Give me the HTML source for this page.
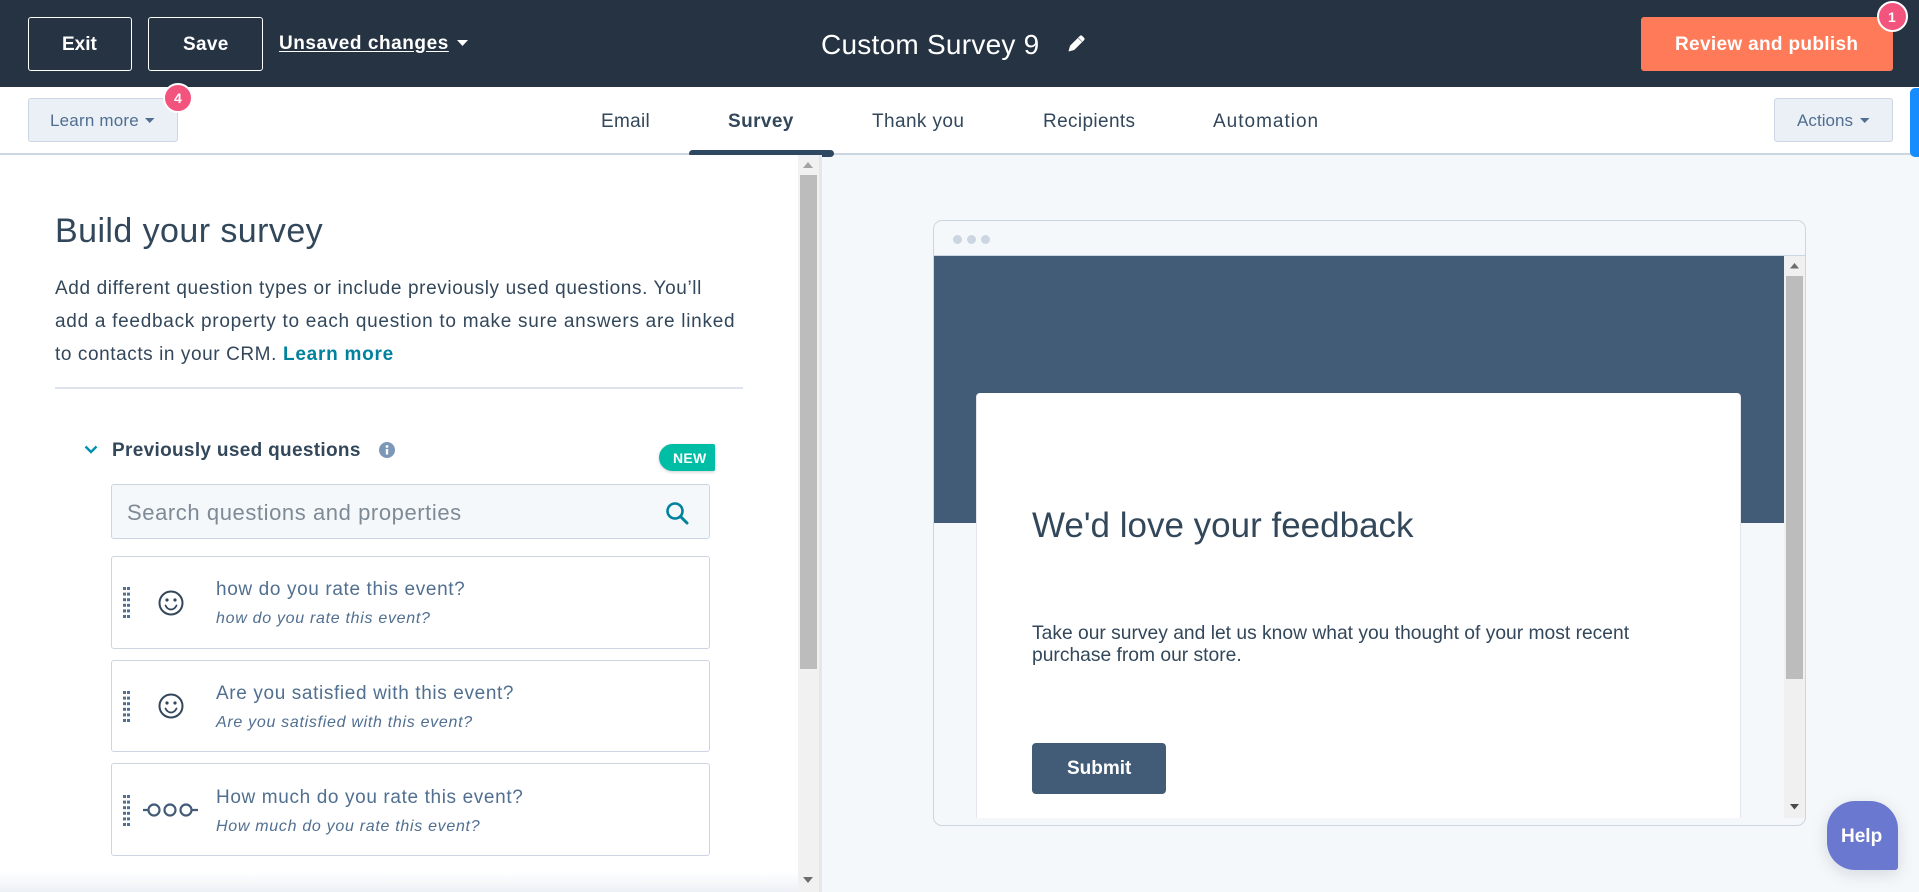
<!DOCTYPE html>
<html lang="en">
<head>
<meta charset="utf-8">
<title>Custom Survey 9</title>
<style>
html,body{margin:0;padding:0;width:1919px;height:892px;overflow:hidden;background:#f5f8fa;font-family:"Liberation Sans",Arial,sans-serif;color:#33475b}
.a{position:absolute;box-sizing:border-box}
.t{position:absolute;white-space:nowrap;line-height:1}
.b{font-weight:700}
.q{color:#516f90;font-size:19px;letter-spacing:.63px}
.s{color:#516f90;font-size:16px;font-style:italic;letter-spacing:.7px}
.card{position:absolute;left:111px;width:599px;box-sizing:border-box;border:1px solid #cbd6e2;border-radius:3px;background:#fff}
svg{position:absolute;overflow:visible}
</style>
</head>
<body>
<!-- top bar -->
<div class="a" style="left:0;top:0;width:1919px;height:87px;background:#253342"></div>
<div class="a" style="left:28px;top:17px;width:104px;height:54px;border:1px solid #fff;border-radius:3px"></div>
<span class="t b" style="left:62px;top:35px;font-size:19px;color:#fff">Exit</span>
<div class="a" style="left:148px;top:17px;width:115px;height:54px;border:1px solid #fff;border-radius:3px"></div>
<span class="t b" style="left:183px;top:35px;font-size:19px;letter-spacing:.3px;color:#fff">Save</span>
<span class="t b" style="left:279px;top:34px;font-size:19px;letter-spacing:.55px;color:#fff;text-decoration:underline;text-underline-offset:2px">Unsaved changes</span>
<svg style="left:457px;top:40px" width="12" height="7"><path d="M0 0H11L5.500 6Z" fill="#fff"/></svg>
<span class="t" style="left:821px;top:31px;font-size:28px;letter-spacing:.25px;color:#fff">Custom Survey 9</span>
<svg style="left:1067px;top:33px" width="20" height="20" viewBox="0 0 20 20"><path d="M1.500 18.500l1.500-5.700L12.800 3a1.800 1.800 0 0 1 2.500 0l1.700 1.700a1.800 1.800 0 0 1 0 2.500L7.200 17z" fill="#fff"/><path d="M11.300 5l3.700 3.700" stroke="#8a97a6" stroke-width=".9"/></svg>
<div class="a" style="left:1641px;top:17px;width:252px;height:54px;background:#ff7a59;border-radius:3px"></div>
<span class="t b" style="left:1675px;top:35px;font-size:19px;letter-spacing:.33px;color:#fff">Review and publish</span>
<div class="a" style="left:1877px;top:1px;width:31px;height:31px;border-radius:50%;background:#f2547d;border:2px solid #fff"></div>
<span class="t b" style="left:1888px;top:10px;font-size:14px;color:#fff">1</span>

<!-- tabs -->
<div class="a" style="left:0;top:87px;width:1919px;height:66px;background:#fff"></div>
<div class="a" style="left:0;top:153px;width:1919px;height:1.500px;background:#cbd6e2"></div>
<div class="a" style="left:28px;top:98px;width:150px;height:44px;background:#eaf0f6;border:1px solid #cbd6e2;border-radius:3px"></div>
<span class="t" style="left:50px;top:112px;font-size:17px;letter-spacing:.2px;color:#506e91">Learn more</span>
<svg style="left:145px;top:118px" width="10" height="6"><path d="M0 0H9.500L4.700 5Z" fill="#506e91"/></svg>
<div class="a" style="left:163px;top:83px;width:30px;height:30px;border-radius:50%;background:#f2547d;border:2px solid #fff"></div>
<span class="t b" style="left:174px;top:91px;font-size:14px;color:#fff">4</span>
<span class="t" style="left:601px;top:112px;font-size:19px;letter-spacing:.3px;color:#33475b">Email</span>
<span class="t b" style="left:728px;top:112px;font-size:19px;letter-spacing:.4px;color:#33475b">Survey</span>
<span class="t" style="left:872px;top:112px;font-size:19px;letter-spacing:.4px;color:#33475b">Thank you</span>
<span class="t" style="left:1043px;top:112px;font-size:19px;letter-spacing:.37px;color:#33475b">Recipients</span>
<span class="t" style="left:1213px;top:112px;font-size:19px;letter-spacing:1px;color:#33475b">Automation</span>
<div class="a" style="left:689px;top:150px;width:145px;height:7px;background:#2f4862;border-radius:4px"></div>
<div class="a" style="left:1774px;top:98px;width:119px;height:44px;background:#eaf0f6;border:1px solid #cbd6e2;border-radius:3px"></div>
<span class="t" style="left:1797px;top:112px;font-size:17px;letter-spacing:.05px;color:#506e91">Actions</span>
<svg style="left:1860px;top:118px" width="10" height="6"><path d="M0 0H9.500L4.700 5Z" fill="#506e91"/></svg>
<div class="a" style="left:1910px;top:88px;width:9px;height:69px;background:#168cff;border-radius:5px 0 0 5px"></div>

<!-- left pane -->
<div class="a" style="left:0;top:155px;width:799px;height:737px;background:#fff"></div>
<div class="a" style="left:0;top:872px;width:799px;height:20px;background:linear-gradient(#fff,#edf1f6)"></div>
<div class="a" style="left:798px;top:155px;width:21px;height:737px;background:#f1f1f1"></div>
<div class="a" style="left:819px;top:155px;width:3px;height:737px;background:#e3e8ef"></div>
<div class="a" style="left:800px;top:175px;width:17px;height:494px;background:#bcbcbc"></div>
<svg style="left:803px;top:162px" width="10" height="6"><path d="M5 0L10 6H0Z" fill="#a3a3a3"/></svg>
<svg style="left:803px;top:877px" width="10" height="6"><path d="M0 0H10L5 6Z" fill="#6d6d6d"/></svg>

<span class="t" style="left:55px;top:214px;font-size:34px;letter-spacing:.43px;color:#33475b">Build your survey</span>
<span class="t" style="left:55px;top:279px;font-size:19px;letter-spacing:.62px;color:#33475b">Add different question types or include previously used questions. You’ll</span>
<span class="t" style="left:55px;top:312px;font-size:19px;letter-spacing:.72px;color:#33475b">add a feedback property to each question to make sure answers are linked</span>
<span class="t" style="left:55px;top:345px;font-size:19px;letter-spacing:.58px;color:#33475b">to contacts in your CRM.</span>
<span class="t b" style="left:283px;top:345px;font-size:19px;letter-spacing:.75px;color:#00819e">Learn more</span>
<div class="a" style="left:55px;top:387px;width:688px;height:2px;background:#dfe3eb"></div>

<svg style="left:84px;top:445px" width="14" height="9"><path d="M1.500 1.500L7 7l5.500-5.500" fill="none" stroke="#0091ae" stroke-width="2.400"/></svg>
<span class="t b" style="left:112px;top:441px;font-size:19px;letter-spacing:.32px;color:#33475b">Previously used questions</span>
<svg style="left:379px;top:442px" width="16" height="16" viewBox="0 0 16 16"><circle cx="8" cy="8" r="8" fill="#7c98b6"/><rect x="6.800" y="7" width="2.400" height="5.500" fill="#fff"/><circle cx="8" cy="4.500" r="1.400" fill="#fff"/></svg>
<div class="a" style="left:659px;top:444px;width:56px;height:27px;background:#00bda5;border-radius:14px 2px 2px 14px;box-shadow:0 1px 3px rgba(0,0,0,.2)"></div>
<span class="t b" style="left:673px;top:451px;font-size:14px;letter-spacing:.3px;color:#fff">NEW</span>

<div class="a" style="left:111px;top:484px;width:599px;height:55px;background:#f5f8fa;border:1px solid #cbd6e2;border-radius:3px"></div>
<span class="t" style="left:127px;top:502px;font-size:22px;letter-spacing:.58px;color:#7e8a96">Search questions and properties</span>
<svg style="left:665px;top:501px" width="24" height="24" viewBox="0 0 24 24"><circle cx="10" cy="10" r="7.500" fill="none" stroke="#00819e" stroke-width="2.600"/><path d="M15.500 15.500L22 22" stroke="#00819e" stroke-width="3" stroke-linecap="round"/></svg>

<!-- question cards -->
<div class="card" style="top:556px;height:93px"></div>
<div class="card" style="top:660px;height:92px"></div>
<div class="card" style="top:763px;height:93px"></div>

<svg style="left:123px;top:587px" width="7" height="31"><g fill="#516f90"><rect x="0" y="0" width="3" height="3"/><rect x="4" y="0" width="3" height="3"/><rect x="0" y="5.600" width="3" height="3"/><rect x="4" y="5.600" width="3" height="3"/><rect x="0" y="11.200" width="3" height="3"/><rect x="4" y="11.200" width="3" height="3"/><rect x="0" y="16.800" width="3" height="3"/><rect x="4" y="16.800" width="3" height="3"/><rect x="0" y="22.400" width="3" height="3"/><rect x="4" y="22.400" width="3" height="3"/><rect x="0" y="28" width="3" height="3"/><rect x="4" y="28" width="3" height="3"/></g></svg>
<svg style="left:123px;top:691px" width="7" height="31"><g fill="#516f90"><rect x="0" y="0" width="3" height="3"/><rect x="4" y="0" width="3" height="3"/><rect x="0" y="5.600" width="3" height="3"/><rect x="4" y="5.600" width="3" height="3"/><rect x="0" y="11.200" width="3" height="3"/><rect x="4" y="11.200" width="3" height="3"/><rect x="0" y="16.800" width="3" height="3"/><rect x="4" y="16.800" width="3" height="3"/><rect x="0" y="22.400" width="3" height="3"/><rect x="4" y="22.400" width="3" height="3"/><rect x="0" y="28" width="3" height="3"/><rect x="4" y="28" width="3" height="3"/></g></svg>
<svg style="left:123px;top:795px" width="7" height="31"><g fill="#516f90"><rect x="0" y="0" width="3" height="3"/><rect x="4" y="0" width="3" height="3"/><rect x="0" y="5.600" width="3" height="3"/><rect x="4" y="5.600" width="3" height="3"/><rect x="0" y="11.200" width="3" height="3"/><rect x="4" y="11.200" width="3" height="3"/><rect x="0" y="16.800" width="3" height="3"/><rect x="4" y="16.800" width="3" height="3"/><rect x="0" y="22.400" width="3" height="3"/><rect x="4" y="22.400" width="3" height="3"/><rect x="0" y="28" width="3" height="3"/><rect x="4" y="28" width="3" height="3"/></g></svg>

<svg style="left:157px;top:589px" width="28" height="28" viewBox="0 0 28 28"><circle cx="14" cy="14" r="11.500" fill="none" stroke="#33475b" stroke-width="2"/><circle cx="10" cy="11" r="1.600" fill="#33475b"/><circle cx="18" cy="11" r="1.600" fill="#33475b"/><path d="M8.500 16.500c1.500 3 3.500 4 5.500 4s4-1 5.500-4" fill="none" stroke="#33475b" stroke-width="1.800" stroke-linecap="round"/></svg>
<svg style="left:157px;top:692px" width="28" height="28" viewBox="0 0 28 28"><circle cx="14" cy="14" r="11.500" fill="none" stroke="#33475b" stroke-width="2"/><circle cx="10" cy="11" r="1.600" fill="#33475b"/><circle cx="18" cy="11" r="1.600" fill="#33475b"/><path d="M8.500 16.500c1.500 3 3.500 4 5.500 4s4-1 5.500-4" fill="none" stroke="#33475b" stroke-width="1.800" stroke-linecap="round"/></svg>
<svg style="left:143px;top:802px" width="55" height="16" viewBox="0 0 55 16"><g fill="none" stroke="#425b76" stroke-width="2.200"><circle cx="11" cy="8" r="5.500"/><circle cx="27" cy="8" r="5.500"/><circle cx="43" cy="8" r="5.500"/><path d="M0 8H5.500M48.500 8H55"/></g></svg>

<span class="t q" style="left:216px;top:580px">how do you rate this event?</span>
<span class="t s" style="left:216px;top:611px">how do you rate this event?</span>
<span class="t q" style="left:216px;top:684px">Are you satisfied with this event?</span>
<span class="t s" style="left:216px;top:715px">Are you satisfied with this event?</span>
<span class="t q" style="left:216px;top:788px">How much do you rate this event?</span>
<span class="t s" style="left:216px;top:819px">How much do you rate this event?</span>

<!-- preview window -->
<div class="a" style="left:933px;top:220px;width:873px;height:606px;background:#f5f8fa;border:1.500px solid #cbd6e2;border-radius:9px"></div>
<div class="a" style="left:934px;top:255px;width:871px;height:1px;background:#cbd6e2"></div>
<div class="a" style="left:953px;top:235px;width:9px;height:9px;border-radius:50%;background:#cbd6e2"></div>
<div class="a" style="left:967px;top:235px;width:9px;height:9px;border-radius:50%;background:#cbd6e2"></div>
<div class="a" style="left:981px;top:235px;width:9px;height:9px;border-radius:50%;background:#cbd6e2"></div>
<div class="a" style="left:934px;top:256px;width:850px;height:267px;background:#425b76"></div>
<div class="a" style="left:976px;top:393px;width:765px;height:425px;background:#fff;border-left:1px solid #e5e5ee;border-right:1px solid #e5e5ee;border-radius:4px 4px 0 0"></div>
<div class="a" style="left:1784px;top:256px;width:21px;height:562px;background:#f0f0f0"></div>
<div class="a" style="left:1786px;top:276px;width:17px;height:403px;background:#bcbcbc"></div>
<svg style="left:1790px;top:263px" width="9" height="6"><path d="M4.500 0L9 5.500H0Z" fill="#6d6d6d"/></svg>
<svg style="left:1790px;top:804px" width="9" height="6"><path d="M0 0H9L4.500 5.500Z" fill="#4a4a4a"/></svg>
<span class="t" style="left:1032px;top:508px;font-size:35px;color:#33475b">We'd love your feedback</span>
<span class="t" style="left:1032px;top:624px;font-size:19.250px;color:#33475b">Take our survey and let us know what you thought of your most recent</span>
<span class="t" style="left:1032px;top:646px;font-size:19.250px;color:#33475b">purchase from our store.</span>
<div class="a" style="left:1032px;top:743px;width:134px;height:51px;background:#425b76;border-radius:4px"></div>
<span class="t b" style="left:1067px;top:759px;font-size:19px;color:#fff">Submit</span>

<!-- help -->
<div class="a" style="left:1827px;top:801px;width:71px;height:69px;background:#6b78d0;border-radius:28px 28px 3px 28px;box-shadow:0 4px 16px rgba(60,80,110,.18)"></div>
<span class="t b" style="left:1841px;top:827px;font-size:19px;color:#fff">Help</span>
</body>
</html>
